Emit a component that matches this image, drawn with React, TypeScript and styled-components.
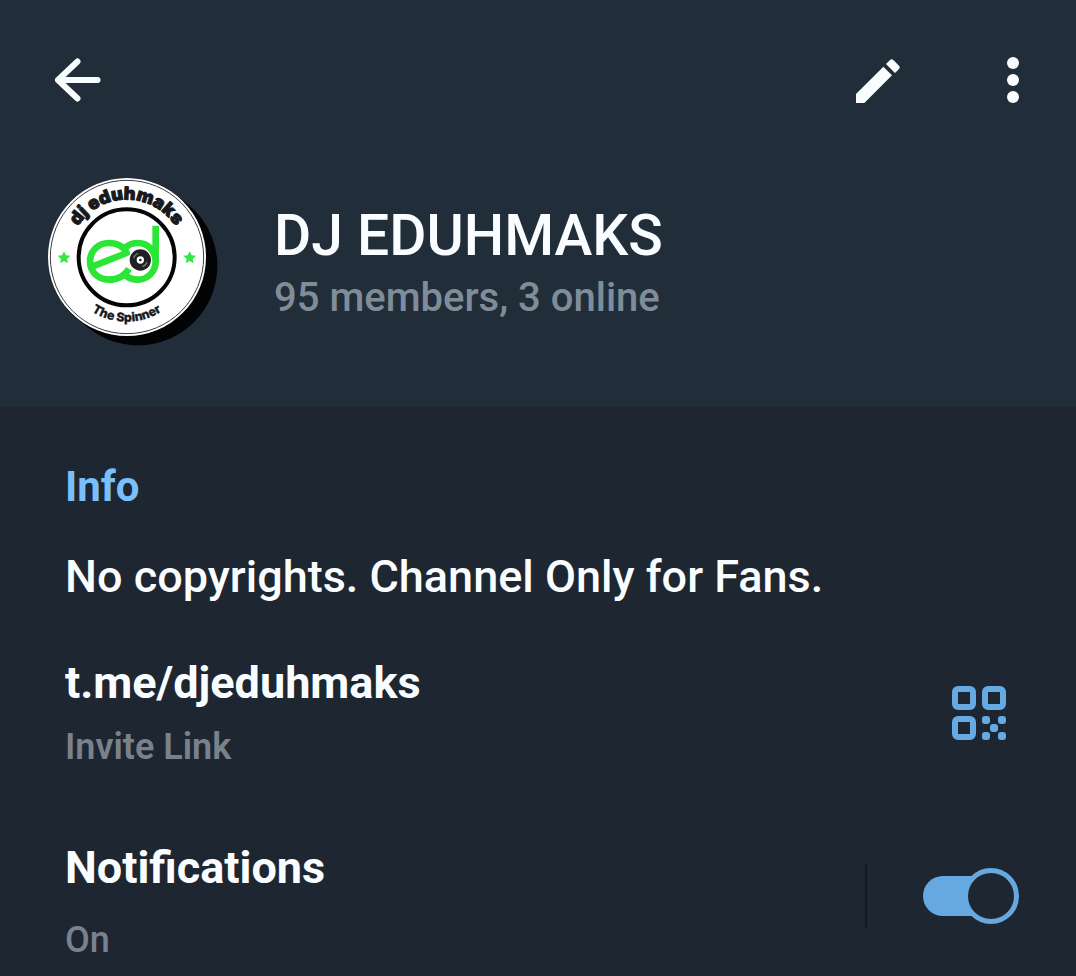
import React, { useState } from "react";
import styled, { createGlobalStyle } from "styled-components";

const GlobalStyle = createGlobalStyle`
  *, *::before, *::after { box-sizing: border-box; }
  body {
    margin: 0;
    background: #1e2731;
    color: #fafdff;
    font-family: Roboto, "Liberation Sans", sans-serif;
  }
  h1, h2, p { margin: 0; }
`;

const Page = styled.div`
  display: flex;
  flex-direction: column;
  min-height: 100vh;
`;

const Header = styled.header`
  display: flex;
  flex-direction: column;
  gap: 57px;
  padding: 40px 23px 60px 37px;
  background: #222d3a;
`;

const Toolbar = styled.nav`
  display: flex;
  align-items: center;
  gap: 55px;
`;

const IconButton = styled.button<{ $push?: boolean }>`
  display: grid;
  place-items: center;
  width: 80px;
  height: 80px;
  margin-right: ${({ $push }) => ($push ? "auto" : "0")};
  padding: 0;
  border: 0;
  background: transparent;
  color: #fafdff;
  cursor: pointer;
`;

const Identity = styled.div`
  display: flex;
  align-items: center;
  gap: 56px;
  padding-left: 11px;
`;

const Names = styled.div`
  display: flex;
  flex-direction: column;
  gap: 6px;
  padding-top: 2px;
`;

const Title = styled.h1`
  font-size: 57px;
  line-height: 64px;
  font-weight: 500;
`;

const Members = styled.p`
  font-size: 40px;
  line-height: 48px;
  font-weight: 500;
  color: #808d99;
`;

const Info = styled.main`
  display: flex;
  flex-direction: column;
  padding: 54px 57px 0 65px;
`;

const SectionTitle = styled.h2`
  font-size: 42px;
  line-height: 52px;
  font-weight: 700;
  color: #79bffa;
`;

const About = styled.p`
  margin-top: 38px;
  font-size: 45px;
  line-height: 52px;
  font-weight: 500;
`;

const Row = styled.div<{ $top: number }>`
  display: flex;
  align-items: center;
  justify-content: space-between;
  margin-top: ${({ $top }) => $top}px;
`;

const Lines = styled.div<{ $gap: number }>`
  display: flex;
  flex-direction: column;
  align-items: flex-start;
  gap: ${({ $gap }) => $gap}px;
`;

const InviteLink = styled.a`
  font-size: 45px;
  line-height: 52px;
  font-weight: 700;
  color: inherit;
  text-decoration: none;
`;

const SwitchLabel = styled.label`
  font-size: 45px;
  line-height: 52px;
  font-weight: 700;
`;

const Caption = styled.p<{ $weight: number }>`
  font-size: 36px;
  line-height: 44px;
  font-weight: ${({ $weight }) => $weight};
  color: #79828c;
`;

const QrButton = styled(IconButton)`
  color: #65aae2;
`;

const SwitchArea = styled.div`
  display: flex;
  align-items: center;
  gap: 56px;
  padding-bottom: 12px;
`;

const Divider = styled.span`
  width: 2px;
  height: 62px;
  background: #111820;
`;

const Switch = styled.input`
  appearance: none;
  display: grid;
  align-items: center;
  width: 96px;
  height: 56px;
  margin: 0;
  cursor: pointer;

  &::before,
  &::after {
    content: "";
    grid-area: 1 / 1;
  }
  &::before {
    width: 78px;
    height: 40px;
    border-radius: 20px;
    background: #65a9e0;
  }
  &::after {
    justify-self: start;
    width: 56px;
    height: 56px;
    border: 5px solid #65a9e0;
    border-radius: 50%;
    background: #1e2731;
  }
  &:checked::after {
    justify-self: end;
  }
`;

const BackIcon = () => (
  <svg width="48" height="44" viewBox="0 0 48 44" fill="none" stroke="currentColor" strokeWidth="6" strokeLinecap="round" strokeLinejoin="round" aria-hidden="true">
    <path d="M24.5 3.5 5 22l19.500 18.500M5 22h39.500" />
  </svg>
);

const PencilIcon = () => (
  <svg width="46" height="46" viewBox="77 51 138 138" fill="currentColor" aria-hidden="true">
    <path d="M80 189v-27l82-82 26 26-83 83zM170 72l12-12q5-5 10 0l17 17q5 5 0 10l-12 12z" />
  </svg>
);

const MoreIcon = () => (
  <svg width="12" height="46" viewBox="0 0 12 46" fill="currentColor" aria-hidden="true">
    <circle cx="6" cy="6" r="6" />
    <circle cx="6" cy="23" r="6" />
    <circle cx="6" cy="40" r="6" />
  </svg>
);

const QrIcon = () => (
  <svg width="54" height="54" viewBox="0 0 54 54" fill="currentColor" aria-hidden="true">
    <g fill="none" stroke="currentColor" strokeWidth="6">
      <rect x="3" y="3" width="18" height="18" rx="3" />
      <rect x="33" y="3" width="18" height="18" rx="3" />
      <rect x="3" y="33" width="18" height="18" rx="3" />
    </g>
    <rect x="30" y="30" width="8" height="8" rx="3" />
    <rect x="46" y="30" width="8" height="8" rx="3" />
    <rect x="38" y="38" width="8" height="8" rx="3" />
    <rect x="30" y="46" width="8" height="8" rx="3" />
    <rect x="46" y="46" width="8" height="8" rx="3" />
  </svg>
);

const star = "M0-19 6-7 19-6 9 4 12 17 0 10-12 17-9 4-19-6-6-7z";

const Avatar = () => (
  <svg width="170" height="170" viewBox="54 51 510 510" role="img" aria-label="DJ Eduhmaks logo">
    <defs>
      <path id="arc-top" d="M117 292a173 173 0 0 1 346 0" />
      <path id="arc-bottom" d="M97 292a193 193 0 0 0 386 0" />
    </defs>
    <path d="M292 292 324 318" stroke="#020305" strokeWidth="476" strokeLinecap="round" />
    <circle cx="291" cy="291" r="237" fill="#fff" />
    <circle cx="291" cy="291" r="230" fill="none" stroke="#3a3d42" strokeWidth="3" />
    <circle cx="290" cy="292" r="144" fill="#fff" stroke="#050505" strokeWidth="12" />
    <g fill="#17191c" stroke="#17191c" strokeLinejoin="round" fontFamily="Inter, sans-serif" textAnchor="middle">
      <text fontSize="54" fontWeight="900" strokeWidth="3">
        <textPath href="#arc-top" startOffset="50%">dj eduhmaks</textPath>
      </text>
      <text fontSize="37" fontWeight="800" strokeWidth="1">
        <textPath href="#arc-bottom" startOffset="50%">The Spinner</textPath>
      </text>
    </g>
    <g fill="#35e548">
      <path d={star} transform="translate(102 293)" />
      <path d={star} transform="translate(479 293)" />
    </g>
    <g fill="none" stroke="#2be636" strokeWidth="20" strokeLinejoin="round">
      <path d="M186 320 290 279C280 259 260 249 237 249C204 249 180 274 180 304C180 335 204 359 237 359C264 359 284 347 297 326" />
      <path d="M287 262C298 252 311 249 324 249C354 249 377 274 377 304C377 336 352 359 324 359C308 359 296 355 285 345M377 197V306" />
    </g>
    <circle cx="331" cy="300" r="32" fill="#211f22" />
    <path d="M311 294a21 21 0 0 1 14-14M351 306a21 21 0 0 1-14 14" fill="none" stroke="#77777b" strokeWidth="4" />
    <circle cx="331" cy="300" r="11" fill="#fff" />
    <circle cx="331" cy="300" r="4" fill="#211f22" />
  </svg>
);

export default function App() {
  const [on, setOn] = useState(true);
  return (
    <>
      <GlobalStyle />
      <Page>
        <Header>
          <Toolbar aria-label="Channel actions">
            <IconButton $push type="button" aria-label="Back"><BackIcon /></IconButton>
            <IconButton type="button" aria-label="Edit"><PencilIcon /></IconButton>
            <IconButton type="button" aria-label="More options"><MoreIcon /></IconButton>
          </Toolbar>
          <Identity>
            <Avatar />
            <Names>
              <Title>DJ EDUHMAKS</Title>
              <Members>95 members, 3 online</Members>
            </Names>
          </Identity>
        </Header>
        <Info>
          <SectionTitle>Info</SectionTitle>
          <About>No copyrights. Channel Only for Fans.</About>
          <Row $top={54}>
            <Lines $gap={16}>
              <InviteLink href="#invite">t.me/djeduhmaks</InviteLink>
              <Caption $weight={600}>Invite Link</Caption>
            </Lines>
            <QrButton type="button" aria-label="Show QR code"><QrIcon /></QrButton>
          </Row>
          <Row $top={73}>
            <Lines $gap={24}>
              <SwitchLabel htmlFor="notifications">Notifications</SwitchLabel>
              <Caption $weight={500}>{on ? "On" : "Off"}</Caption>
            </Lines>
            <SwitchArea>
              <Divider />
              <Switch id="notifications" type="checkbox" role="switch" checked={on} onChange={(e) => setOn(e.target.checked)} />
            </SwitchArea>
          </Row>
        </Info>
      </Page>
    </>
  );
}
